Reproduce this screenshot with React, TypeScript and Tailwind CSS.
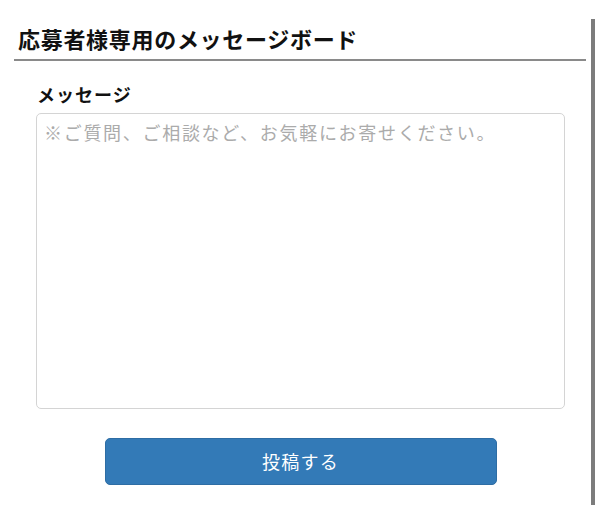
import React from "react";

export default function App() {
  return (
    <div
      className="w-[600px] h-[526px] bg-white pt-[19px]"
      style={{ fontFamily: '"Noto Sans CJK JP", "Noto Sans", sans-serif' }}
    >
      <div className="w-[595px] h-[486px] border-r-[4px] border-[#7c7c7c] pl-[14px] pr-[5px]">
        <div className="h-[40px] pl-[4px] text-[22px] leading-[38px] font-bold text-[#111] tracking-[0.7px]">
          応募者様専用のメッセージボード
        </div>
        <div className="h-[1.5px] bg-[#8a8a8a]" />
        <form className="pl-[22px] pr-[21px]" onSubmit={(e) => e.preventDefault()}>
          <label className="block mt-[21px] pl-px h-[24px] text-[18px] leading-[24px] font-bold text-[#111] tracking-[1px]">
            メッセージ
          </label>
          <textarea
            className="block mt-[7px] w-full h-[296px] resize-none rounded-[5px] border border-[#d4d4d4] pl-[7px] pr-[7px] pt-[4px] text-[18px] leading-[28px] text-[#333] placeholder:text-[#ababab] outline-none tracking-[1.7px]"
            placeholder="※ご質問、ご相談など、お気軽にお寄せください。"
          />
          <button
            type="submit"
            className="block mx-auto mt-[29px] w-[392px] h-[47px] rounded-[5px] bg-[#337ab7] border border-[#2e6da4] text-white text-[18px] leading-[28px] tracking-[1.3px]"
          >
            投稿する
          </button>
        </form>
      </div>
    </div>
  );
}
